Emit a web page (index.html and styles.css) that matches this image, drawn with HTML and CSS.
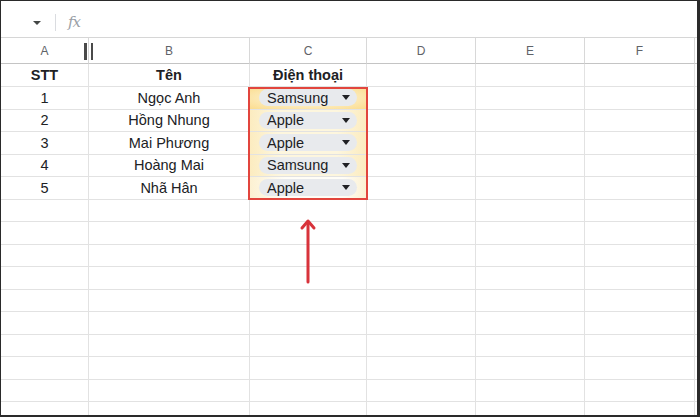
FILE: index.html
```html
<!DOCTYPE html>
<html lang="vi">
<head>
<meta charset="utf-8">
<link rel="stylesheet" href="styles.css">
</head>
<body>
<div class="frame">
  <div class="toolbar">
    <span class="caret"></span>
    <span class="sep"></span>
    <span class="fx">fx</span>
  </div>
  <div class="sheet">
    <div class="grid">
      <div class="ch">A<span class="handle"><i></i><i></i></span></div><div class="ch">B</div><div class="ch">C</div><div class="ch">D</div><div class="ch">E</div><div class="ch">F</div><div class="ch end"></div>

      <div class="c b">STT</div><div class="c b">Tên</div><div class="c b">Điện thoại</div><div class="c"></div><div class="c"></div><div class="c"></div><div class="c end"></div>

      <div class="c">1</div><div class="c">Ngọc Anh</div><div class="c dd y1"><span class="chip">Samsung<span class="tri"></span></span></div><div class="c"></div><div class="c"></div><div class="c"></div><div class="c end"></div>

      <div class="c">2</div><div class="c">Hồng Nhung</div><div class="c dd y2"><span class="chip">Apple<span class="tri"></span></span></div><div class="c"></div><div class="c"></div><div class="c"></div><div class="c end"></div>

      <div class="c">3</div><div class="c">Mai Phương</div><div class="c dd y2"><span class="chip">Apple<span class="tri"></span></span></div><div class="c"></div><div class="c"></div><div class="c"></div><div class="c end"></div>

      <div class="c">4</div><div class="c">Hoàng Mai</div><div class="c dd y2"><span class="chip">Samsung<span class="tri"></span></span></div><div class="c"></div><div class="c"></div><div class="c"></div><div class="c end"></div>

      <div class="c">5</div><div class="c">Nhã Hân</div><div class="c dd y3"><span class="chip">Apple<span class="tri"></span></span></div><div class="c"></div><div class="c"></div><div class="c"></div><div class="c end"></div>

      <div class="c"></div><div class="c"></div><div class="c"></div><div class="c"></div><div class="c"></div><div class="c"></div><div class="c end"></div>
      <div class="c"></div><div class="c"></div><div class="c"></div><div class="c"></div><div class="c"></div><div class="c"></div><div class="c end"></div>
      <div class="c"></div><div class="c"></div><div class="c"></div><div class="c"></div><div class="c"></div><div class="c"></div><div class="c end"></div>
      <div class="c"></div><div class="c"></div><div class="c"></div><div class="c"></div><div class="c"></div><div class="c"></div><div class="c end"></div>
      <div class="c"></div><div class="c"></div><div class="c"></div><div class="c"></div><div class="c"></div><div class="c"></div><div class="c end"></div>
      <div class="c"></div><div class="c"></div><div class="c"></div><div class="c"></div><div class="c"></div><div class="c"></div><div class="c end"></div>
      <div class="c"></div><div class="c"></div><div class="c"></div><div class="c"></div><div class="c"></div><div class="c"></div><div class="c end"></div>
      <div class="c"></div><div class="c"></div><div class="c"></div><div class="c"></div><div class="c"></div><div class="c"></div><div class="c end"></div>
      <div class="c"></div><div class="c"></div><div class="c"></div><div class="c"></div><div class="c"></div><div class="c"></div><div class="c end"></div>
      <div class="c"></div><div class="c"></div><div class="c"></div><div class="c"></div><div class="c"></div><div class="c"></div><div class="c end"></div>
    </div>
    <div class="redbox"></div>
    <svg class="arrow" width="20" height="70" viewBox="0 0 20 70">
      <path d="M10 66 L10 6" stroke="#d8333b" stroke-width="3" stroke-linecap="round" fill="none"/>
      <path d="M4 12 L10 5 L16 12" stroke="#d8333b" stroke-width="3" stroke-linecap="round" stroke-linejoin="round" fill="none"/>
    </svg>
  </div>
</div>
</body>
</html>
```
FILE: styles.css
```css
html, body {
  margin: 0;
  padding: 0;
  background: #ffffff;
}
.frame {
  box-sizing: border-box;
  width: 700px;
  height: 417px;
  border-left: 1px solid #2a2a2a;
  border-top: 1px solid #2a2a2a;
  border-right: 3px solid #2a2a2a;
  border-bottom: 2px solid #2a2a2a;
  overflow: hidden;
  font-family: "Liberation Sans", Arial, sans-serif;
  color: #202124;
  background: #fff;
}
.toolbar {
  height: 37px;
  box-sizing: border-box;
  border-bottom: 1px solid #d6d6d6;
  display: flex;
  align-items: center;
  padding-left: 32px;
  padding-top: 7px;
}
.caret {
  width: 0;
  height: 0;
  border-left: 4px solid transparent;
  border-right: 4px solid transparent;
  border-top: 4px solid #444746;
  margin-right: 14px;
}
.sep {
  width: 1px;
  height: 17px;
  background: #dadce0;
  margin-right: 12px;
}
.fx {
  font-family: "DejaVu Serif", "Liberation Serif", serif;
  font-style: italic;
  font-size: 15px;
  color: #9aa0a6;
  letter-spacing: -1px;
  margin-top: -2px;
}
.sheet {
  position: relative;
}
.grid {
  display: grid;
  grid-template-columns: 88px 161px 117px 109px 109px 110px 10px;
  grid-template-rows: 26px 23px;
  grid-auto-rows: 22.5px;
}
.ch {
  position: relative;
  box-sizing: border-box;
  border-right: 1px solid #d8d8d8;
  border-bottom: 1px solid #c4c4c4;
  display: flex;
  align-items: center;
  justify-content: center;
  font-size: 12px;
  color: #5f6368;
}
.c {
  box-sizing: border-box;
  border-right: 1px solid #e2e2e2;
  border-bottom: 1px solid #e2e2e2;
  display: flex;
  align-items: center;
  justify-content: center;
  font-size: 14.5px;
  color: #202124;
  white-space: nowrap;
}
.end {
  border-right: none;
}
.b {
  font-weight: bold;
}
.handle {
  position: absolute;
  right: -5px;
  top: 5px;
  display: flex;
  gap: 4px;
}
.handle i {
  display: block;
  width: 3px;
  height: 17px;
  background: #4a4a4a;
}
.handle i + i {
  width: 2px;
}
.dd {
  justify-content: flex-start;
  padding-left: 9px;
}
.y1 {
  background: radial-gradient(ellipse at 50% 50%, #fdf2d0 30%, #fbdc8e 100%);
}
.y2 {
  background: linear-gradient(90deg, #fcecc0 0%, #fdf6de 25%, #fdf6de 75%, #fcecc0 100%);
}
.y3 {
  background: linear-gradient(90deg, #fcf1d2 0%, #fffdf6 30%, #fffdf6 80%, #fcf1d2 100%);
}
.chip {
  box-sizing: border-box;
  width: 98px;
  height: 17px;
  border-radius: 9px;
  background: #e8eaed;
  display: flex;
  align-items: center;
  padding-left: 8px;
  font-size: 14.5px;
  color: #202124;
  position: relative;
}
.tri {
  position: absolute;
  right: 7px;
  top: 6px;
  width: 0;
  height: 0;
  border-left: 4px solid transparent;
  border-right: 4px solid transparent;
  border-top: 5px solid #202124;
}
.redbox {
  position: absolute;
  left: 247px;
  top: 49px;
  width: 120px;
  height: 113px;
  box-sizing: border-box;
  border: 2px solid #e2453d;
  pointer-events: none;
}
.arrow {
  position: absolute;
  left: 297px;
  top: 178px;
}
```
